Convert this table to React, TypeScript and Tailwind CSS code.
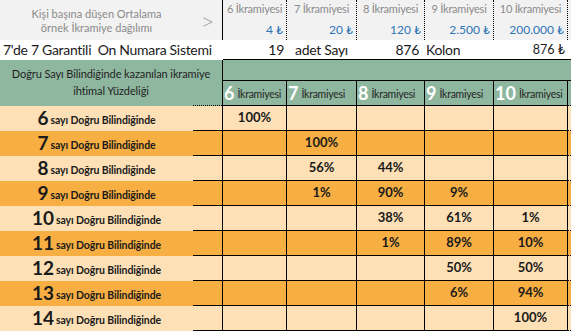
import React from 'react';

const COLS = 'grid grid-cols-[193px_30px_64px_70px_68px_69px_74px_3px]';

const PRIZES = [
  { n: '6', v: '4' },
  { n: '7', v: '20' },
  { n: '8', v: '120' },
  { n: '9', v: '2.500' },
  { n: '10', v: '200.000' },
];

// each row: label number, then percent per prize column (6..10)
const ROWS: { n: number; p: string[] }[] = [
  { n: 6, p: ['100%', '', '', '', ''] },
  { n: 7, p: ['', '100%', '', '', ''] },
  { n: 8, p: ['', '56%', '44%', '', ''] },
  { n: 9, p: ['', '1%', '90%', '9%', ''] },
  { n: 10, p: ['', '', '38%', '61%', '1%'] },
  { n: 11, p: ['', '', '1%', '89%', '10%'] },
  { n: 12, p: ['', '', '', '50%', '50%'] },
  { n: 13, p: ['', '', '', '6%', '94%'] },
  { n: 14, p: ['', '', '', '', '100%'] },
];

export default function App() {
  return (
    <div className="w-[571px] h-[331px] overflow-hidden bg-white font-['Lato','Liberation_Sans',sans-serif] text-[#1a1a1a]">
      {/* Top row: average prize per person */}
      <div className={`${COLS} h-[40px] bg-[#f2f2f2]`}>
        <div className="flex flex-col items-center justify-center pt-[1px] text-[11px] leading-[14px] text-[#8a8a8a]">
          <span>Kişi başına düşen Ortalama</span>
          <span>örnek İkramiye dağılımı</span>
        </div>
        <div className="flex items-center justify-center border-r border-black pt-[2px] text-[24px] font-light leading-none text-[#a6a6a6]">
          &gt;
        </div>
        {PRIZES.map(p => (
          <div key={p.n} className="flex flex-col border-r border-dotted border-black">
            <div className="flex h-[20px] items-center justify-center pb-[1px] text-[11px] tracking-[-0.2px] text-[#8a8a8a]">
              {p.n} İkramiyesi
            </div>
            <div className="flex h-[20px] items-center justify-end pr-[3px] text-[12px] text-[#2e75b6]">
              {p.v} ₺
            </div>
          </div>
        ))}
        <div />
      </div>

      {/* System row */}
      <div className={`${COLS} h-[20px] text-[14px] leading-[19px] tracking-[-0.3px]`}>
        <div className="col-span-2 whitespace-pre pl-[3px]">7'de 7 Garantili  On Numara Sistemi</div>
        <div className="border-b border-black pr-[3px] text-right">19</div>
        <div className="border-b border-black pl-[8px]">adet Sayı</div>
        <div className="border-b border-black pr-[6px] text-right">876</div>
        <div className="border-b border-black pl-[1px]">Kolon</div>
        <div className="border-b border-black pr-[3px] text-right text-[12.5px] tracking-normal">876 ₺</div>
        <div className="border-b border-black" />
      </div>

      {/* Green header */}
      <div className={`${COLS} grid-rows-[21px_25px] bg-[#8fb79f]`}>
        <div className="col-span-2 row-span-2 flex flex-col border-r border-black">
          <div className="flex flex-1 flex-col items-center justify-center pb-[1px] text-[11px] leading-[17px] tracking-[-0.1px] text-[#1f1f1f]">
            <span>Doğru Sayı Bilindiğinde kazanılan ikramiye</span>
            <span>ihtimal Yüzdeliği</span>
          </div>
          <div className="flex h-px">
            <div className="w-[193px]" />
            <div className="flex-1 border-t border-dotted border-black" />
          </div>
        </div>
        <div className="col-span-6 border-b border-black" />
        {PRIZES.map(p => (
          <div
            key={p.n}
            className="flex items-end whitespace-nowrap border-r border-b border-r-black border-b-black border-b-dotted pb-[2px] pl-[1px]"
          >
            <span className="text-[18px] font-bold leading-[20px] text-white">{p.n}</span>
            <span className="pl-[3px] text-[10.5px] leading-[17px] tracking-[-0.25px] text-[#262626]">İkramiyesi</span>
          </div>
        ))}
        <div className="border-b border-dotted border-black" />
      </div>

      {/* Probability rows */}
      {ROWS.map((r, i) => (
        <div
          key={r.n}
          className={`${COLS} h-[25px] font-bold ${i % 2 === 0 ? 'bg-[#fde0b6]' : 'bg-[#f7ae42]'}`}
        >
          <div className="flex items-end justify-center pb-[3px]">
            <span className="text-[19px] leading-[20px]">{r.n}</span>
            <span className="pl-[2px] text-[10.5px] leading-[15px] tracking-[-0.1px]">sayı Doğru Bilindiğinde</span>
          </div>
          <div className="border-r border-b border-r-black border-b-black border-b-dotted" />
          {r.p.map((v, j) => (
            <div
              key={j}
              className="flex items-center justify-center border-r border-b border-r-black border-b-black border-b-dotted pb-[1px] text-[13px]"
            >
              {v}
            </div>
          ))}
          <div className="border-b border-dotted border-black" />
        </div>
      ))}
    </div>
  );
}
